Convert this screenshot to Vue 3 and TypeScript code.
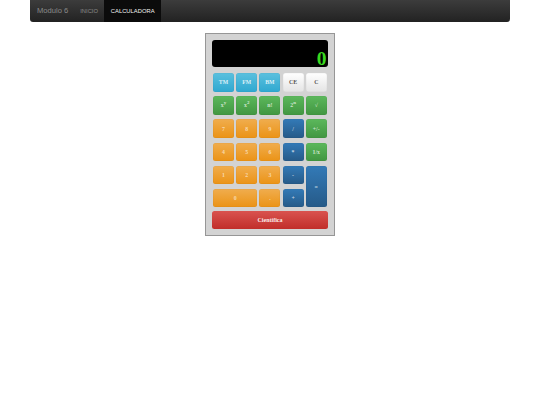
<script setup lang="ts">
interface Key { label: string; exp?: string; tone: string; span?: string }
const keys: Key[] = [
  { label: 'TM', tone: 'info' }, { label: 'FM', tone: 'info' }, { label: 'BM', tone: 'info' },
  { label: 'CE', tone: 'plain' }, { label: 'C', tone: 'plain' },
  { label: 'x', exp: 'y', tone: 'green' }, { label: 'x', exp: '2', tone: 'green' }, { label: 'n!', tone: 'green' },
  { label: '2', exp: 'n', tone: 'green' }, { label: '√', tone: 'green' },
  { label: '7', tone: 'orange' }, { label: '8', tone: 'orange' }, { label: '9', tone: 'orange' },
  { label: '/', tone: 'blue' }, { label: '+/-', tone: 'green' },
  { label: '4', tone: 'orange' }, { label: '5', tone: 'orange' }, { label: '6', tone: 'orange' },
  { label: '*', tone: 'blue' }, { label: '1/x', tone: 'green' },
  { label: '1', tone: 'orange' }, { label: '2', tone: 'orange' }, { label: '3', tone: 'orange' },
  { label: '-', tone: 'blue' }, { label: '=', tone: 'blue', span: 'tall' },
  { label: '0', tone: 'orange', span: 'wide' }, { label: '.', tone: 'orange' }, { label: '+', tone: 'blue' }
]
</script>

<template>
  <div class="page">
    <nav class="navbar">
      <span class="brand">Modulo 6</span>
      <a class="link">INICIO</a>
      <a class="link active">CALCULADORA</a>
    </nav>
    <main class="calc">
      <div class="display">0</div>
      <div class="keys">
        <button v-for="(k, i) in keys" :key="i" class="key" :class="[k.tone, k.span]">
          {{ k.label }}<sup v-if="k.exp">{{ k.exp }}</sup>
        </button>
      </div>
      <button class="sci">Cientifica</button>
    </main>
  </div>
</template>

<style>
html, body { margin: 0; background: #fff; }
</style>

<style scoped>
.page { width: 540px; height: 405px; overflow: hidden; display: flex; flex-direction: column; align-items: center; }
.navbar {
  width: 480px; height: 22px; flex: none; box-sizing: border-box; display: flex; align-items: stretch;
  background: linear-gradient(#3c3c3c, #222); border-radius: 0 0 3px 3px;
  font-family: "Liberation Sans", Arial, sans-serif;
}
.brand { color: #8a8a8a; font-size: 7.6px; line-height: 22px; padding: 0 6px 0 7px; }
.link { color: #8a8a8a; font-size: 5.8px; line-height: 22px; padding: 0 6px; }
.link.active { color: #f2f2f2; background: #0b0b0b; padding: 0 6.5px 0 6.8px; letter-spacing: .03px; }
.calc {
  margin-top: 11px; width: 130px; height: 203px; box-sizing: border-box; padding: 6px 6px 0;
  background: #d3d3d3; border: 1px solid #969696;
  font-family: "Liberation Serif", "Times New Roman", serif;
}
.display {
  height: 27px; padding: 10px 1.5px 0 0; box-sizing: border-box;
  background: #000; border-radius: 3px; color: #39d81f; text-align: right;
  font-size: 19.5px; font-weight: bold; line-height: 17px;
}
.keys {
  display: grid; grid-template-columns: repeat(5, 21px); grid-auto-rows: 18.5px;
  column-gap: 2.2px; row-gap: 4.7px; padding: 6px 0 0 1px;
}
.key {
  margin: 0; padding: 0; border: 0; border-radius: 2.5px; color: rgba(255,255,255,.72);
  box-shadow: inset 0 0 0 .5px rgba(0,0,0,.05);
  font: bold 5.8px "Liberation Serif", "Times New Roman", serif; text-align: center;
}
.key sup { font-size: 5px; line-height: 0; }
.wide { grid-column: span 2; width: 44.2px; }
.tall { grid-row: span 2; }
.info { background: linear-gradient(#5bc0de, #2fa8d0); color: rgba(255,255,255,.8); }
.plain { background: linear-gradient(#fff, #e4e4e4); color: #555; }
.green { background: linear-gradient(#5cb85c, #419641); }
.orange { background: linear-gradient(#f0ad4e, #eb9316); color: rgba(255,255,255,.6); }
.blue { background: linear-gradient(#337ab7, #265a88); }
.sci {
  display: block; width: 116px; height: 18px; margin: 4px 0 0; padding: 0; border: 0; border-radius: 2.5px;
  background: linear-gradient(#d9534f, #c12e2a); color: rgba(255,255,255,.92);
  font: bold 6px "Liberation Serif", "Times New Roman", serif;
}
</style>
